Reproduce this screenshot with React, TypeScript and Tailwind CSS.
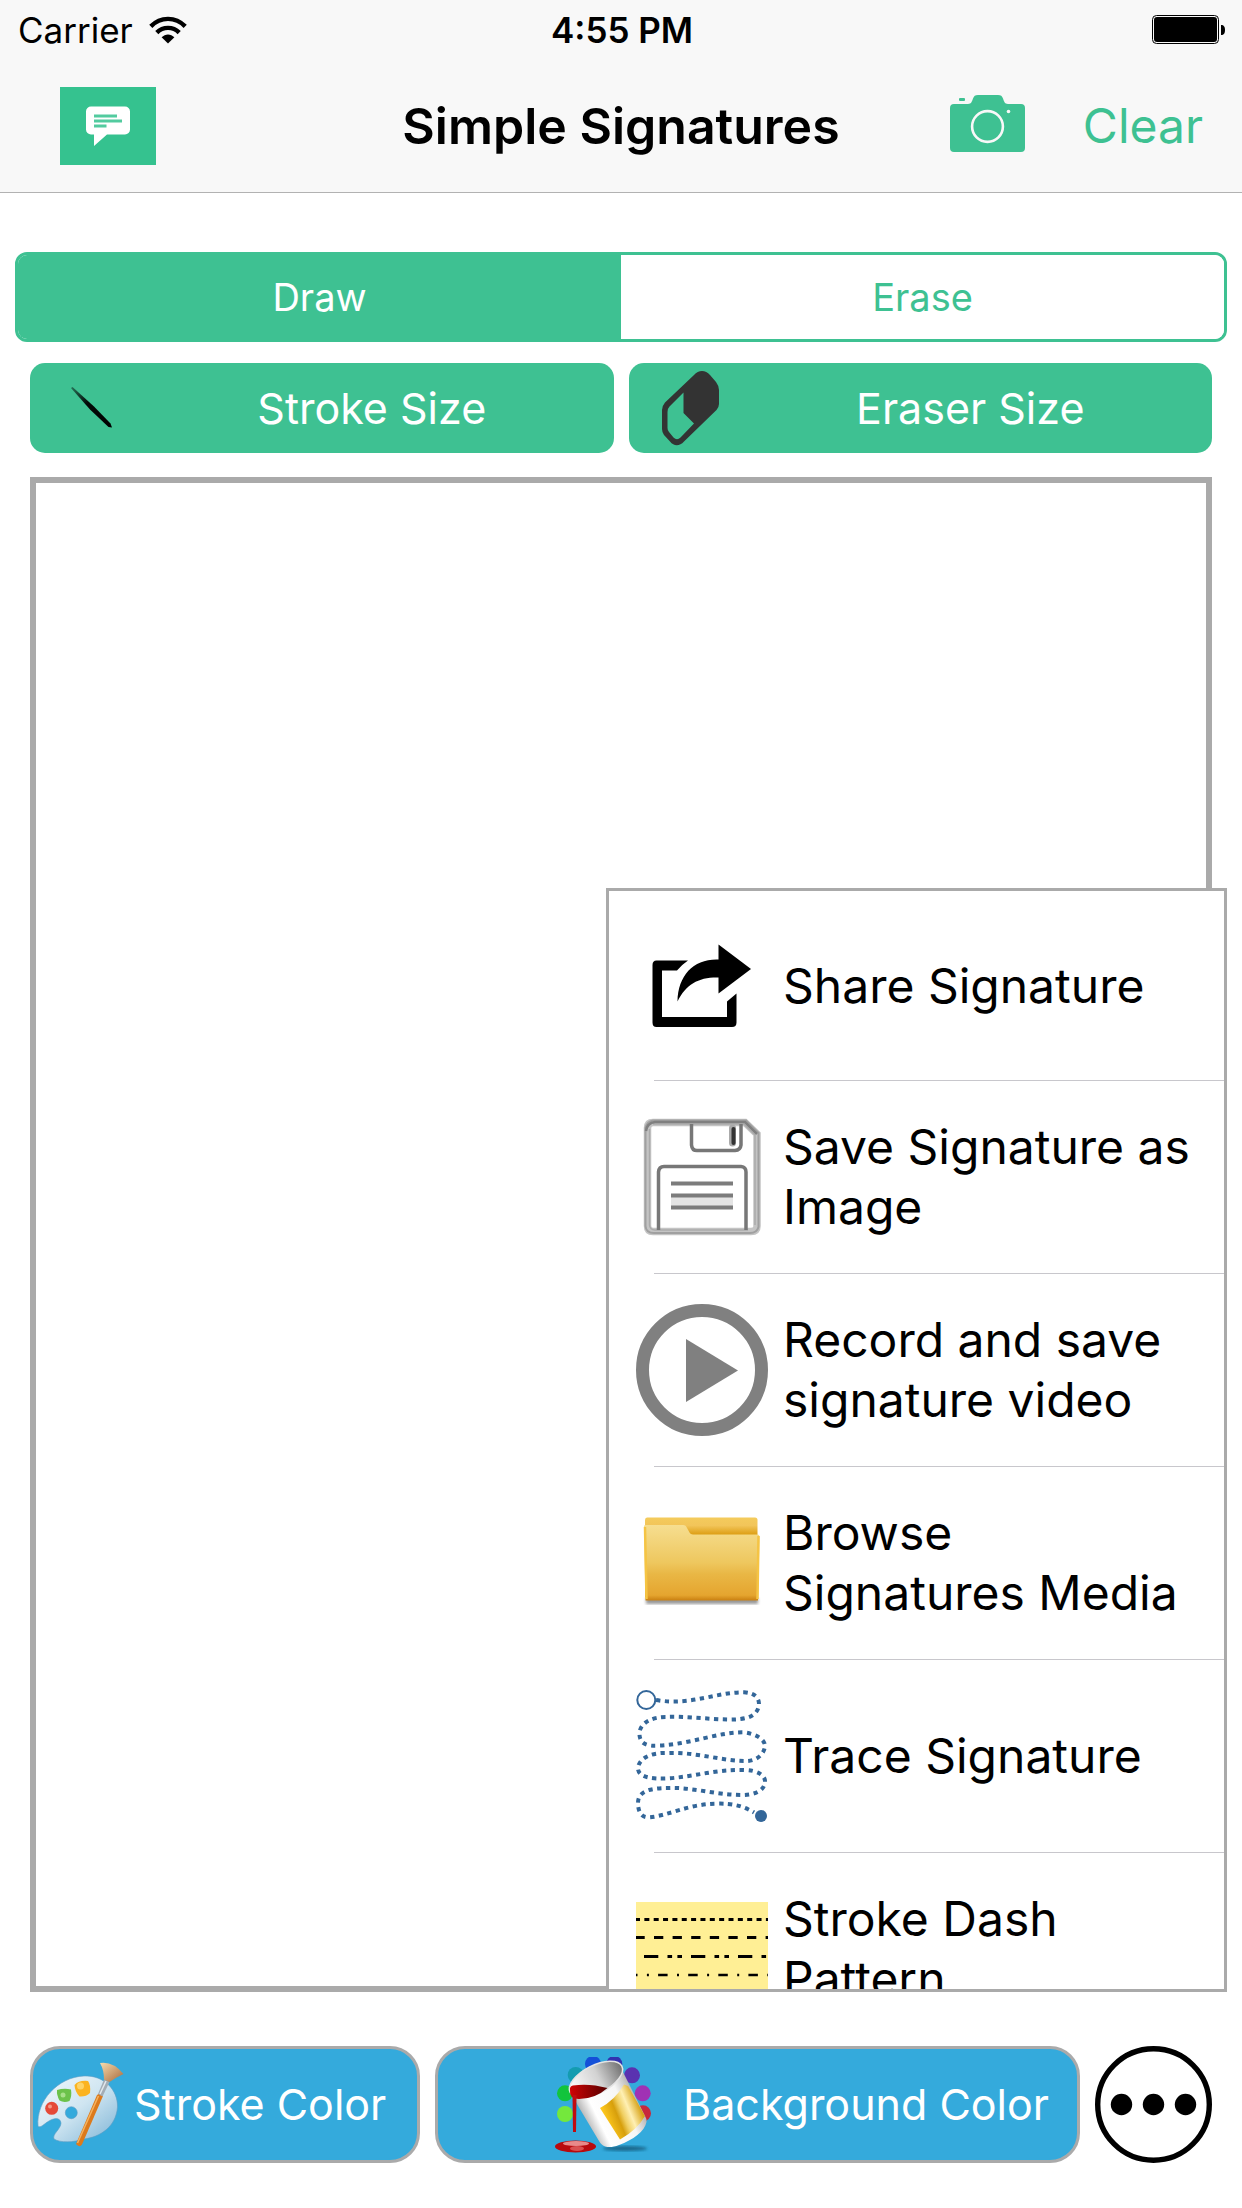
import { useState } from "react";
import type { ReactNode } from "react";

function WifiIcon() {
  return (
    <svg viewBox="0 0 38 28" className="h-7 w-[38px]" fill="none" stroke="#000" strokeWidth="4.4" aria-hidden="true">
      <path d="M1.8 10.4C11.5 .4 26.500 .4 36.200 10.400" />
      <path d="M7.800 16.600C14 10.300 24 10.300 30.200 16.600" />
      <path d="M12.600 21.300C16.200 17.400 21.800 17.400 25.400 21.300L19 27.600Z" fill="#000" stroke="none" />
    </svg>
  );
}

function BatteryIcon() {
  return (
    <svg viewBox="0 0 74 30" className="h-[30px] w-[74px]" aria-hidden="true">
      <rect x=".5" y=".5" width="66" height="28" rx="4" fill="none" stroke="#000" />
      <rect x="2" y="2" width="63" height="25" rx="3" />
      <path d="M69 10c3 0 4 2 4 5s-1 5-4 5z" />
    </svg>
  );
}

function ChatIcon() {
  return (
    <svg viewBox="0 0 96 78" className="h-[78px] w-24" aria-hidden="true">
      <path d="M31 19.500h34a5 5 0 0 1 5 5v18a5 5 0 0 1-5 5H47L34 59V47.500h-3a5 5 0 0 1-5-5v-18a5 5 0 0 1 5-5z" fill="#fff" />
      <path d="M34 29h23M34 34h28M34 39h12.500" stroke="#35c28f" strokeWidth="3" opacity=".85" />
    </svg>
  );
}

function CameraIcon() {
  return (
    <svg viewBox="0 0 75 58" className="h-[58px] w-[75px]" aria-hidden="true">
      <path
        d="M4 10h14c3.500 0 4-3 5-5.500C24 2 25 1 28 1h20c3 0 4 1 5 3.500C54 7 54.500 10 58 10h13a4 4 0 0 1 4 4v40a4 4 0 0 1-4 4H4a4 4 0 0 1-4-4V14a4 4 0 0 1 4-4z"
        fill="#3ec192"
      />
      <rect x="9" y="4" width="6" height="3" rx="1" fill="#3ec192" />
      <circle cx="37.500" cy="32.500" r="15.400" fill="none" stroke="#f8f8f8" strokeWidth="2.600" />
      <circle cx="58.500" cy="17.500" r="1.800" fill="#f8f8f8" />
    </svg>
  );
}

function StrokeIcon() {
  return (
    <svg viewBox="0 0 44 44" className="size-11" aria-hidden="true">
      <defs>
        <linearGradient id="ink" x1="0" y1="0" x2="1" y2="1">
          <stop offset="0" stopColor="#000" stopOpacity=".4" />
          <stop offset=".4" stopColor="#000" stopOpacity=".95" />
          <stop offset="1" stopColor="#000" />
        </linearGradient>
      </defs>
      <path d="M1 2 2.500 1 24 20.500 40.500 37.500 42 41.500 38.500 41 20 23.500Z" fill="url(#ink)" />
    </svg>
  );
}

function EraserIcon() {
  return (
    <svg viewBox="0 0 59 76" className="h-[76px] w-[59px]" aria-hidden="true">
      <path
        fillRule="evenodd"
        fill="#333"
        d="M33 5C37.500-.5 44.500-.5 49 5L55 12Q58 16 58 20V34Q58 37 55.500 40L23 71.500C18.500 76.500 13 76.500 9 71.500L3 65Q1 62 1 59V40Q1 36 4 32.500ZM22.500 22.500 8.500 36.500Q6.500 38.500 6.500 42V58Q6.500 60.500 8 62L12.500 67.500Q16 71 19.500 67.500L33 53.500 22.500 43Z"
      />
    </svg>
  );
}

function ShareIcon() {
  return (
    <svg viewBox="0 0 132 132" className="size-33" aria-hidden="true">
      <path d="M20.500 40.500H52Q46 44.500 41 50.500H26V97H91V81.500L100.500 73.500V102.500Q100.500 107 96 107H20.500Q16.500 107 16.500 102.500V45Q16.500 40.500 20.500 40.500Z" />
      <path d="M82.500 24.500 115 49 82.500 73.500V57.500C63 57 50 64 41.500 81.500C42 55 58 38.500 82.500 39.500Z" />
    </svg>
  );
}

function FloppyIcon() {
  return (
    <svg viewBox="0 0 132 132" className="size-33" fill="none" aria-hidden="true">
      <path d="M17 11.500H109L121 23V115Q121 120.500 115 120.500H17Q11.500 120.500 11.500 115V17Q11.500 11.500 17 11.500Z" stroke="#c4c4c4" strokeWidth="7.500" />
      <path d="M17 9.500H110L122.500 22V116Q121 122 114 122H18Q10 122 9.500 115V17Q11 10.500 17 9.500Z" stroke="#a0a0a0" strokeWidth="2" />
      <path d="M17 13H108L119 24V114M13.500 18V114Q14 119 19 119H112" stroke="#aaa" strokeWidth="1.500" />
      <path d="M10 20Q11 12 19 11H109L121 23" stroke="#808080" strokeWidth="2.500" />
      <path d="M55.500 13V34Q56 39.500 61 39.500H99Q104.500 39 105 34V13" stroke="#777" strokeWidth="3.500" />
      <path d="M96.500 17V32" stroke="#aaa" strokeWidth="7" strokeLinecap="round" />
      <path d="M97.500 18V32" stroke="#333" strokeWidth="4" strokeLinecap="round" />
      <path d="M22.500 119V61Q23 55.500 28 55.500H105Q110 56 110 61V119" stroke="#777" strokeWidth="3.500" />
      <path d="M35 84.500H97V97H35Z" fill="#e4e4e4" />
      <path d="M35 72.500H97M35 84.500H97M35 96.500H97" stroke="#7c7c7c" strokeWidth="4" />
    </svg>
  );
}

function PlayIcon() {
  return (
    <svg viewBox="0 0 132 132" className="size-33" aria-hidden="true">
      <circle cx="66" cy="66" r="59.500" fill="none" stroke="#808080" strokeWidth="13" />
      <path d="M50 35 102 66.500 50 98Z" fill="#808080" />
    </svg>
  );
}

function FolderIcon() {
  return (
    <svg viewBox="0 0 132 132" className="size-33" aria-hidden="true">
      <defs>
        <linearGradient id="folderFront" x1="0" y1="0" x2="0" y2="1">
          <stop offset="0" stopColor="#f6de90" />
          <stop offset=".5" stopColor="#eec75e" />
          <stop offset=".65" stopColor="#e9b745" />
          <stop offset=".93" stopColor="#e5a52f" />
          <stop offset="1" stopColor="#c97f10" />
        </linearGradient>
        <linearGradient id="folderBack" x1="0" y1="0" x2="0" y2="1">
          <stop offset="0" stopColor="#f4cb5c" />
          <stop offset=".1" stopColor="#f2c55a" />
          <stop offset=".22" stopColor="#dc9c10" />
        </linearGradient>
        <filter id="folderBlur">
          <feGaussianBlur stdDeviation="1.500" />
        </filter>
      </defs>
      <path d="M10 101H122V107H10Z" fill="#555" opacity=".6" filter="url(#folderBlur)" />
      <path d="M11 20.500H119Q121.500 20.500 121.500 23V100H9V23Q9 20.500 11 20.500Z" fill="url(#folderBack)" />
      <path d="M8 29Q8 28 10 28H47Q50 28 51 31L53.500 35.500Q54.500 37.500 57 37.500H122Q123.500 37.500 123.500 40L122 103.500H9.500Z" fill="url(#folderFront)" />
      <path d="M9 30 10.500 102M122.500 39 121.500 102" stroke="#f5c444" strokeWidth="2.500" fill="none" />
    </svg>
  );
}

function TraceIcon() {
  return (
    <svg viewBox="0 0 132 132" className="size-33" fill="none" stroke="#336699" aria-hidden="true">
      <circle cx="10.300" cy="10" r="9" strokeWidth="2" />
      <path
        strokeWidth="4"
        strokeDasharray="4.300 4.500"
        d="M20 10C55 16 80 2 108 2.300C119 3 123 8 123 14C122 26 112 30 91 29.500C70 29 48 26 30 27C14 27 4 34 3.500 43C3 53 10 57 24 55.500C55 54 82 42 108 42.300C121 44 129 50 129 56C128 65 120 71 110 71C86 71 60 62 33 63C12 62 2 70 2 79C3 87 14 89 30 88.500C58 87 80 79 108 80C122 80 129 86 129 91C129 101 118 105 106 105C80 105 56 97 32 98C12 98 2 102 2 113C2 121 5 128 13 127.300C32 126 52 114 80 113.700C98 113 109 117 118 122.500"
      />
      <circle cx="125" cy="126" r="6" fill="#336699" stroke="none" />
    </svg>
  );
}

function DashIcon() {
  return (
    <svg viewBox="0 0 132 94" className="h-[94px] w-33" fill="none" stroke="#000" strokeWidth="3" aria-hidden="true">
      <rect width="132" height="94" fill="#ffef95" stroke="none" />
      <path d="M-1 17.500H132" strokeDasharray="5 4.350" />
      <path d="M-.6 35.500H132" strokeDasharray="9.300 9.300" />
      <path d="M8 54.500H132" strokeDasharray="14.300 9.200 4.600 5.300 4.600 9" />
      <path d="M-8 73H132" strokeDasharray="9.500 9.400 2 9.200" strokeWidth="2.500" />
    </svg>
  );
}

function PaletteIcon() {
  return (
    <svg viewBox="0 0 96 96" className="size-24 shrink-0" aria-hidden="true">
      <defs>
        <linearGradient id="board" x1="0" y1="0" x2="1" y2="1">
          <stop offset="0" stopColor="#f4fafd" />
          <stop offset=".5" stopColor="#cfe5f1" />
          <stop offset="1" stopColor="#7db4d6" />
        </linearGradient>
        <linearGradient id="bristle" x1="0" y1="0" x2="1" y2="1">
          <stop offset="0" stopColor="#f5dcae" />
          <stop offset="1" stopColor="#a8683a" />
        </linearGradient>
      </defs>
      <path
        fillRule="evenodd"
        fill="url(#board)"
        stroke="#5d9cc2"
        strokeWidth=".6"
        d="M4 69C2 44 24 20 50 19C70 18 84 33 83.500 50C82 70 66 80 50 82C40 85.500 26 86 20 82C18 77 27 72 27 66C26 60 20 61 15 64C11 66 6 72 4 69ZM37.300 49.700A6 6 0 1 0 37.300 61.700A6 6 0 1 0 37.300 49.700Z"
      />
      <circle cx="17.700" cy="51.300" r="6.500" fill="#e54a38" />
      <circle cx="16" cy="49.500" r="2" fill="#f39a86" />
      <path d="M23 33Q30 31 37 32.500Q38 39 35.500 44Q30 46 25.500 43.500Q22.500 38 23 33Z" fill="#6cc24a" />
      <circle cx="29" cy="38" r="2.500" fill="#a8e08a" />
      <path d="M40.500 28Q45 23 54 24Q57 28 56 36Q52 40 45.500 39.500Q41 35 40.500 28Z" fill="#fbb320" />
      <circle cx="46.500" cy="29" r="3.500" fill="#fdd366" />
      <path d="M42 87 63 38Q67 35 69 39L48 87.500Q45.500 91 42 87Z" fill="#dc7a1c" />
      <path d="M43.500 86 64.500 39" stroke="#f5b25e" strokeWidth="1.500" />
      <path d="M64 37 70 22.500 75.500 25 68.500 39.500Z" fill="#a3adb5" />
      <path d="M66 37 72 24" stroke="#e3e9ed" strokeWidth="1.500" />
      <path d="M66 6Q79 4 89.500 17Q83 20 75.500 25L70 22.500Q70 13 66 6Z" fill="url(#bristle)" />
    </svg>
  );
}

function BucketIcon() {
  return (
    <svg viewBox="0 0 96 96" className="size-24 shrink-0" aria-hidden="true">
      <defs>
        <linearGradient id="pail" x1=".15" y1=".6" x2=".85" y2=".25">
          <stop offset="0" stopColor="#b4b4b4" />
          <stop offset=".22" stopColor="#fff" />
          <stop offset=".7" stopColor="#f6f6f6" />
          <stop offset="1" stopColor="#a8a8a8" />
        </linearGradient>
        <linearGradient id="pailInside" x1="0" y1="0" x2="1" y2="0">
          <stop offset="0" stopColor="#fff" />
          <stop offset=".55" stopColor="#d2d2d2" />
          <stop offset="1" stopColor="#707070" />
        </linearGradient>
        <linearGradient id="pailLabel" x1=".15" y1=".7" x2=".85" y2=".35">
          <stop offset="0" stopColor="#ffc91e" />
          <stop offset=".35" stopColor="#d79f0c" />
          <stop offset=".5" stopColor="#f0cf62" />
          <stop offset=".7" stopColor="#fff0b4" />
          <stop offset="1" stopColor="#d8a51c" />
        </linearGradient>
        <linearGradient id="paint" x1="0" y1="0" x2="1" y2="0">
          <stop offset="0" stopColor="#d00404" />
          <stop offset="1" stopColor="#560000" />
        </linearGradient>
        <filter id="pailBlur">
          <feGaussianBlur stdDeviation="1.500" />
        </filter>
      </defs>
      <circle cx="10" cy="57" r="8" fill="#74e83c" />
      <circle cx="10" cy="36.300" r="8" fill="#12c43c" />
      <circle cx="20.700" cy="18" r="8" fill="#149cb0" />
      <circle cx="38" cy="7" r="8" fill="#1450d8" />
      <circle cx="59.300" cy="7" r="8" fill="#3232b0" />
      <circle cx="77" cy="18.300" r="8" fill="#5a32b0" />
      <circle cx="87.700" cy="36.300" r="8" fill="#a032b4" />
      <circle cx="88" cy="56.300" r="8" fill="#c8283c" />
      <ellipse cx="70" cy="91.500" rx="22" ry="2.500" fill="#0b4a68" opacity=".7" filter="url(#pailBlur)" />
      <path d="M16 34C18 40 20 42 22.500 48L44 84C47 90 54 92 64 88C78 83 90 74 91.500 65Q92 62 90 59L66.500 12Z" fill="url(#pail)" />
      <ellipse cx="41" cy="22.300" rx="29" ry="14" transform="rotate(-27 41 22.300)" fill="url(#pailInside)" stroke="#e4e4e4" strokeWidth="1.500" />
      <path d="M15 33Q14.500 29 18 28.500Q34 26 52.500 31Q40 42 24 42Q14 42 15 33Z" fill="url(#paint)" />
      <path d="M17.500 38H21.500L21 75H18Z" fill="#c00c10" />
      <path d="M45 51Q60 43 69 27.500L73 29 90 59Q82 73 65 82.500Z" fill="url(#pailLabel)" />
      <ellipse cx="20.500" cy="89.500" rx="20.500" ry="6" fill="#b80a0e" />
      <ellipse cx="21" cy="86.500" rx="13" ry="2.500" fill="#e88a8a" />
      <ellipse cx="22" cy="91.500" rx="7" ry="2.500" fill="#d85050" />
    </svg>
  );
}

function MoreIcon() {
  return (
    <svg viewBox="0 0 117 117" className="size-[117px]" aria-hidden="true">
      <circle cx="58.500" cy="58.500" r="55.800" fill="#fff" stroke="#000" strokeWidth="5.400" />
      <circle cx="26.500" cy="58.500" r="10.700" />
      <circle cx="58.500" cy="58.500" r="10.700" />
      <circle cx="90.500" cy="58.500" r="10.700" />
    </svg>
  );
}

const menuItems: { label: string; icon: ReactNode }[] = [
  { label: "Share Signature", icon: <ShareIcon /> },
  { label: "Save Signature as Image", icon: <FloppyIcon /> },
  { label: "Record and save signature video", icon: <PlayIcon /> },
  { label: "Browse Signatures Media", icon: <FolderIcon /> },
  { label: "Trace Signature", icon: <TraceIcon /> },
  { label: "Stroke Dash Pattern", icon: <DashIcon /> },
];

export default function App() {
  const [mode, setMode] = useState("Draw");
  const [menuOpen, setMenuOpen] = useState(true);

  return (
    <div className="flex min-h-screen flex-col bg-white font-['Inter',sans-serif] text-black">
      <header className="border-b border-[#b2b2b2] bg-[#f8f8f8]">
        <div className="grid h-15 grid-cols-[1fr_auto_1fr] items-center pr-4 pl-[18px] text-[35px] leading-none">
          <div className="flex items-center gap-4">
            <span>Carrier</span>
            <WifiIcon />
          </div>
          <span className="font-semibold">4:55 PM</span>
          <div className="flex justify-end">
            <BatteryIcon />
          </div>
        </div>
        <div className="grid h-33 grid-cols-[1fr_auto_1fr] items-center px-[39px]">
          <button aria-label="Feedback" className="ml-[21px] w-24 bg-[#35c28f]">
            <ChatIcon />
          </button>
          <h1 className="text-[50px] leading-none font-semibold">Simple Signatures</h1>
          <div className="flex items-center justify-end gap-[58px]">
            <button aria-label="Camera" className="pb-1.5">
              <CameraIcon />
            </button>
            <button className="text-[48px] leading-none text-[#3ec192]">Clear</button>
          </div>
        </div>
      </header>

      <main className="flex flex-1 flex-col px-[30px] pt-[59px] pb-[45px]">
        <div className="-mx-[15px] flex overflow-hidden rounded-xl border-3 border-[#3ec192]">
          {["Draw", "Erase"].map((m) => (
            <button
              key={m}
              onClick={() => setMode(m)}
              className={`h-21 flex-1 text-[38px] leading-none ${
                mode === m ? "bg-[#3ec192] text-white" : "bg-white text-[#3ec192]"
              }`}
            >
              {m}
            </button>
          ))}
        </div>

        <div className="mt-[21px] flex gap-[15px]">
          <button className="flex h-[90px] flex-1 items-center rounded-[15px] bg-[#3ec192] text-[43px] leading-none text-white">
            <span className="flex w-25 justify-center pl-6">
              <StrokeIcon />
            </span>
            <span className="flex-1">Stroke Size</span>
          </button>
          <button className="flex h-[90px] flex-1 items-center rounded-[15px] bg-[#3ec192] text-[43px] leading-none text-white">
            <span className="flex w-25 justify-center pl-6">
              <EraserIcon />
            </span>
            <span className="flex-1">Eraser Size</span>
          </button>
        </div>

        {/* Drawing area */}
        <div className="relative mt-6 flex-1 border-6 border-[#aaa] bg-white">
          {menuOpen && (
            <ul className="absolute -right-[21px] -bottom-1.5 h-[1104px] w-[621px] overflow-hidden border-3 border-[#aaa] bg-white">
              {menuItems.map((item) => (
                <li key={item.label} className="group">
                  <button className="flex h-48 w-full items-center gap-[15px] pr-6 pl-[27px] text-left text-[48px] leading-[60px] group-first:h-[189px]">
                    <span className="flex w-33 shrink-0 justify-center">{item.icon}</span>
                    <span>{item.label}</span>
                  </button>
                  <div className="ml-[45px] h-px bg-[#c8c7cc]" />
                </li>
              ))}
            </ul>
          )}
        </div>

        <div className="mt-[54px] flex gap-[15px]">
          <button className="flex h-[117px] w-[390px] items-center gap-1 rounded-[30px] border-3 border-[#aaa] bg-[#34aadc] px-px text-[43px] leading-none text-white">
            <PaletteIcon />
            <span>Stroke Color</span>
          </button>
          <button className="flex h-[117px] flex-1 items-center justify-end gap-8 rounded-[30px] border-3 border-[#aaa] bg-[#34aadc] pr-7 text-[43px] leading-none text-white">
            <BucketIcon />
            <span>Background Color</span>
          </button>
          <button aria-label="More options" onClick={() => setMenuOpen(!menuOpen)} className="rounded-full">
            <MoreIcon />
          </button>
        </div>
      </main>
    </div>
  );
}
